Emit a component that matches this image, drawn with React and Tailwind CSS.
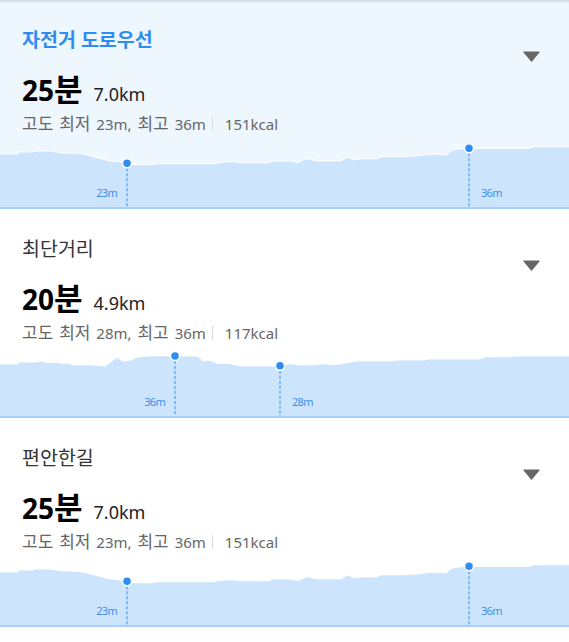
import React from "react";

const routes = [
  {
    title: "자전거 도로우선",
    active: true,
    num: "25",
    unit: "분",
    dist: "7.0km",
    detail: [["고도", true], [" ", false], ["최저", true], [" 23m, ", false], ["최고", true], [" 36m", false]],
    kcal: "151kcal",
    points:
      "0,14 18,14 18,12 33,12 33,11 51,11 54,11.7 64,13 73,13 83,14 94,16.7 109,20.7 122,22 127,23.3 134,24.7 152,24.7 156,23.7 214,23.7 218,22.7 232,21.3 240,22.7 269,22.7 272,21 290,21 298,22.3 307,18.3 316,20.7 341,20.7 348,16.7 354,20 363,18.7 377,18.7 381,16.7 403,16.7 417,16 432,14 446,15 452,10 461,8.7 469,8.3 479,8.3 530,8.3 533,6.7 569,6.7",
    markers: [
      { x: 127, y: 23.3, label: "23m", side: "left" },
      { x: 469, y: 8.3, label: "36m", side: "right" },
    ],
  },
  {
    title: "최단거리",
    num: "20",
    unit: "분",
    dist: "4.9km",
    detail: [["고도", true], [" ", false], ["최저", true], [" 28m, ", false], ["최고", true], [" 36m", false]],
    kcal: "117kcal",
    points:
      "0,15 18,15 18,13 36,13 40,11.7 47,13.3 58,13.3 64,14.7 67,14 73,15.7 91,15.7 105,17 112,11.7 117,7.7 123,12 131,11 138,7.7 152,6.7 171,6.7 175,7 181,7 198,7 203,11.7 209,11 218,14.3 229,14.3 240,17 269,17 280,16.7 290,14.3 298,15.7 316,15.7 323,14.3 334,15.7 348,13.3 359,11.7 392,11.7 396,11 425,11 428,10 479,10 486,7.7 512,7.7 515,7 569,7",
    markers: [
      { x: 175, y: 7, label: "36m", side: "left" },
      { x: 280, y: 16.7, label: "28m", side: "right" },
    ],
  },
  {
    title: "편안한길",
    num: "25",
    unit: "분",
    dist: "7.0km",
    detail: [["고도", true], [" ", false], ["최저", true], [" 23m, ", false], ["최고", true], [" 36m", false]],
    kcal: "151kcal",
    points:
      "0,14 18,14 18,12 33,12 33,11 51,11 54,11.7 64,13 73,13 83,14 94,16.7 109,20.7 122,22 127,23.3 134,24.7 152,24.7 156,23.7 214,23.7 218,22.7 232,21.3 240,22.7 269,22.7 272,21 290,21 298,22.3 307,18.3 316,20.7 341,20.7 348,16.7 354,20 363,18.7 377,18.7 381,16.7 403,16.7 417,16 432,14 446,15 452,10 461,8.7 469,8.3 479,8.3 530,8.3 533,6.7 569,6.7",
    markers: [
      { x: 127, y: 23.3, label: "23m", side: "left" },
      { x: 469, y: 8.3, label: "36m", side: "right" },
    ],
  },
];

function Chart({ points, markers }) {
  const H = 67;
  return (
    <svg width="569" height={H} viewBox={`0 0 569 ${H}`} className="block shrink-0">
      <path d={`M0,${H} L${points} L569,${H} Z`} fill="#cce5fd" />
      <polyline points={points} fill="none" stroke="#ffffff" strokeWidth="1.2" strokeOpacity="0.9" />
      {markers.map((m, i) => (
        <g key={i}>
          <line x1={m.x} y1={m.y} x2={m.x} y2={H} stroke="#2f8cf2" strokeWidth="1" strokeDasharray="3 2" />
          <circle cx={m.x} cy={m.y} r="4.5" fill="#2f8cf2" stroke="#ffffff" strokeWidth="1.5" />
          <text
            x={m.side === "left" ? m.x - 10 : m.x + 12}
            y={57}
            textAnchor={m.side === "left" ? "end" : "start"}
            fontSize="11"
            letterSpacing="-0.7"
            fill="#3b8ef0"
            fontFamily="'Noto Sans', sans-serif"
          >
            {m.label}
          </text>
        </g>
      ))}
    </svg>
  );
}

function Card({ r }) {
  return (
    <div
      className={
        "h-[209px] flex flex-col border-b-2 border-[#a9cff8] " +
        (r.active ? "bg-[#eef6fe] shadow-[inset_0_3px_3px_-2px_rgba(0,0,0,0.18)]" : "bg-white")
      }
    >
      <div className="flex-1 flex pl-[22px] pr-[29px]">
        <div className="flex-1 flex flex-col pt-[27px]">
          <div
            className={
              "text-[19.5px] leading-[26px] " +
              (r.active ? "font-bold text-[#2d8cf0]" : "text-[#333333]")
            }
          >
            {r.title}
          </div>
          <div className="mt-[18px] flex items-baseline gap-[11px] h-[36px]">
            <span className="leading-[36px] font-bold text-black">
              <span className="text-[28px]">{r.num}</span>
              <span className="text-[31px]">{r.unit}</span>
            </span>
            <span className="text-[18px] text-[#222222]">{r.dist}</span>
          </div>
          <div className="mt-[6px] flex items-center leading-[22px] text-[#666666]">
            <span className="whitespace-pre [word-spacing:2px]">
              {r.detail.map(([t, ko], i) => (
                <span key={i} className={ko ? "text-[17px]" : "text-[15px]"}>
                  {t}
                </span>
              ))}
            </span>
            <span className="mx-[6px] w-px h-[14px] bg-[#d9d9d9]" />
            <span className="ml-[6px] text-[15px]">{r.kcal}</span>
          </div>
        </div>
        <div className="pt-[51px]">
          <svg width="17" height="11" viewBox="0 0 17 11" className="block">
            <path d="M1 1 H16 L8.5 10 Z" fill="#666666" stroke="#666666" strokeWidth="1.2" strokeLinejoin="round" />
          </svg>
        </div>
      </div>
      <Chart points={r.points} markers={r.markers} />
    </div>
  );
}

export default function App() {
  return (
    <div className="w-[569px] h-[642px] bg-white overflow-hidden font-['Noto_Sans','Noto_Sans_CJK_KR',sans-serif]">
      {routes.map((r, i) => (
        <Card key={i} r={r} />
      ))}
    </div>
  );
}
